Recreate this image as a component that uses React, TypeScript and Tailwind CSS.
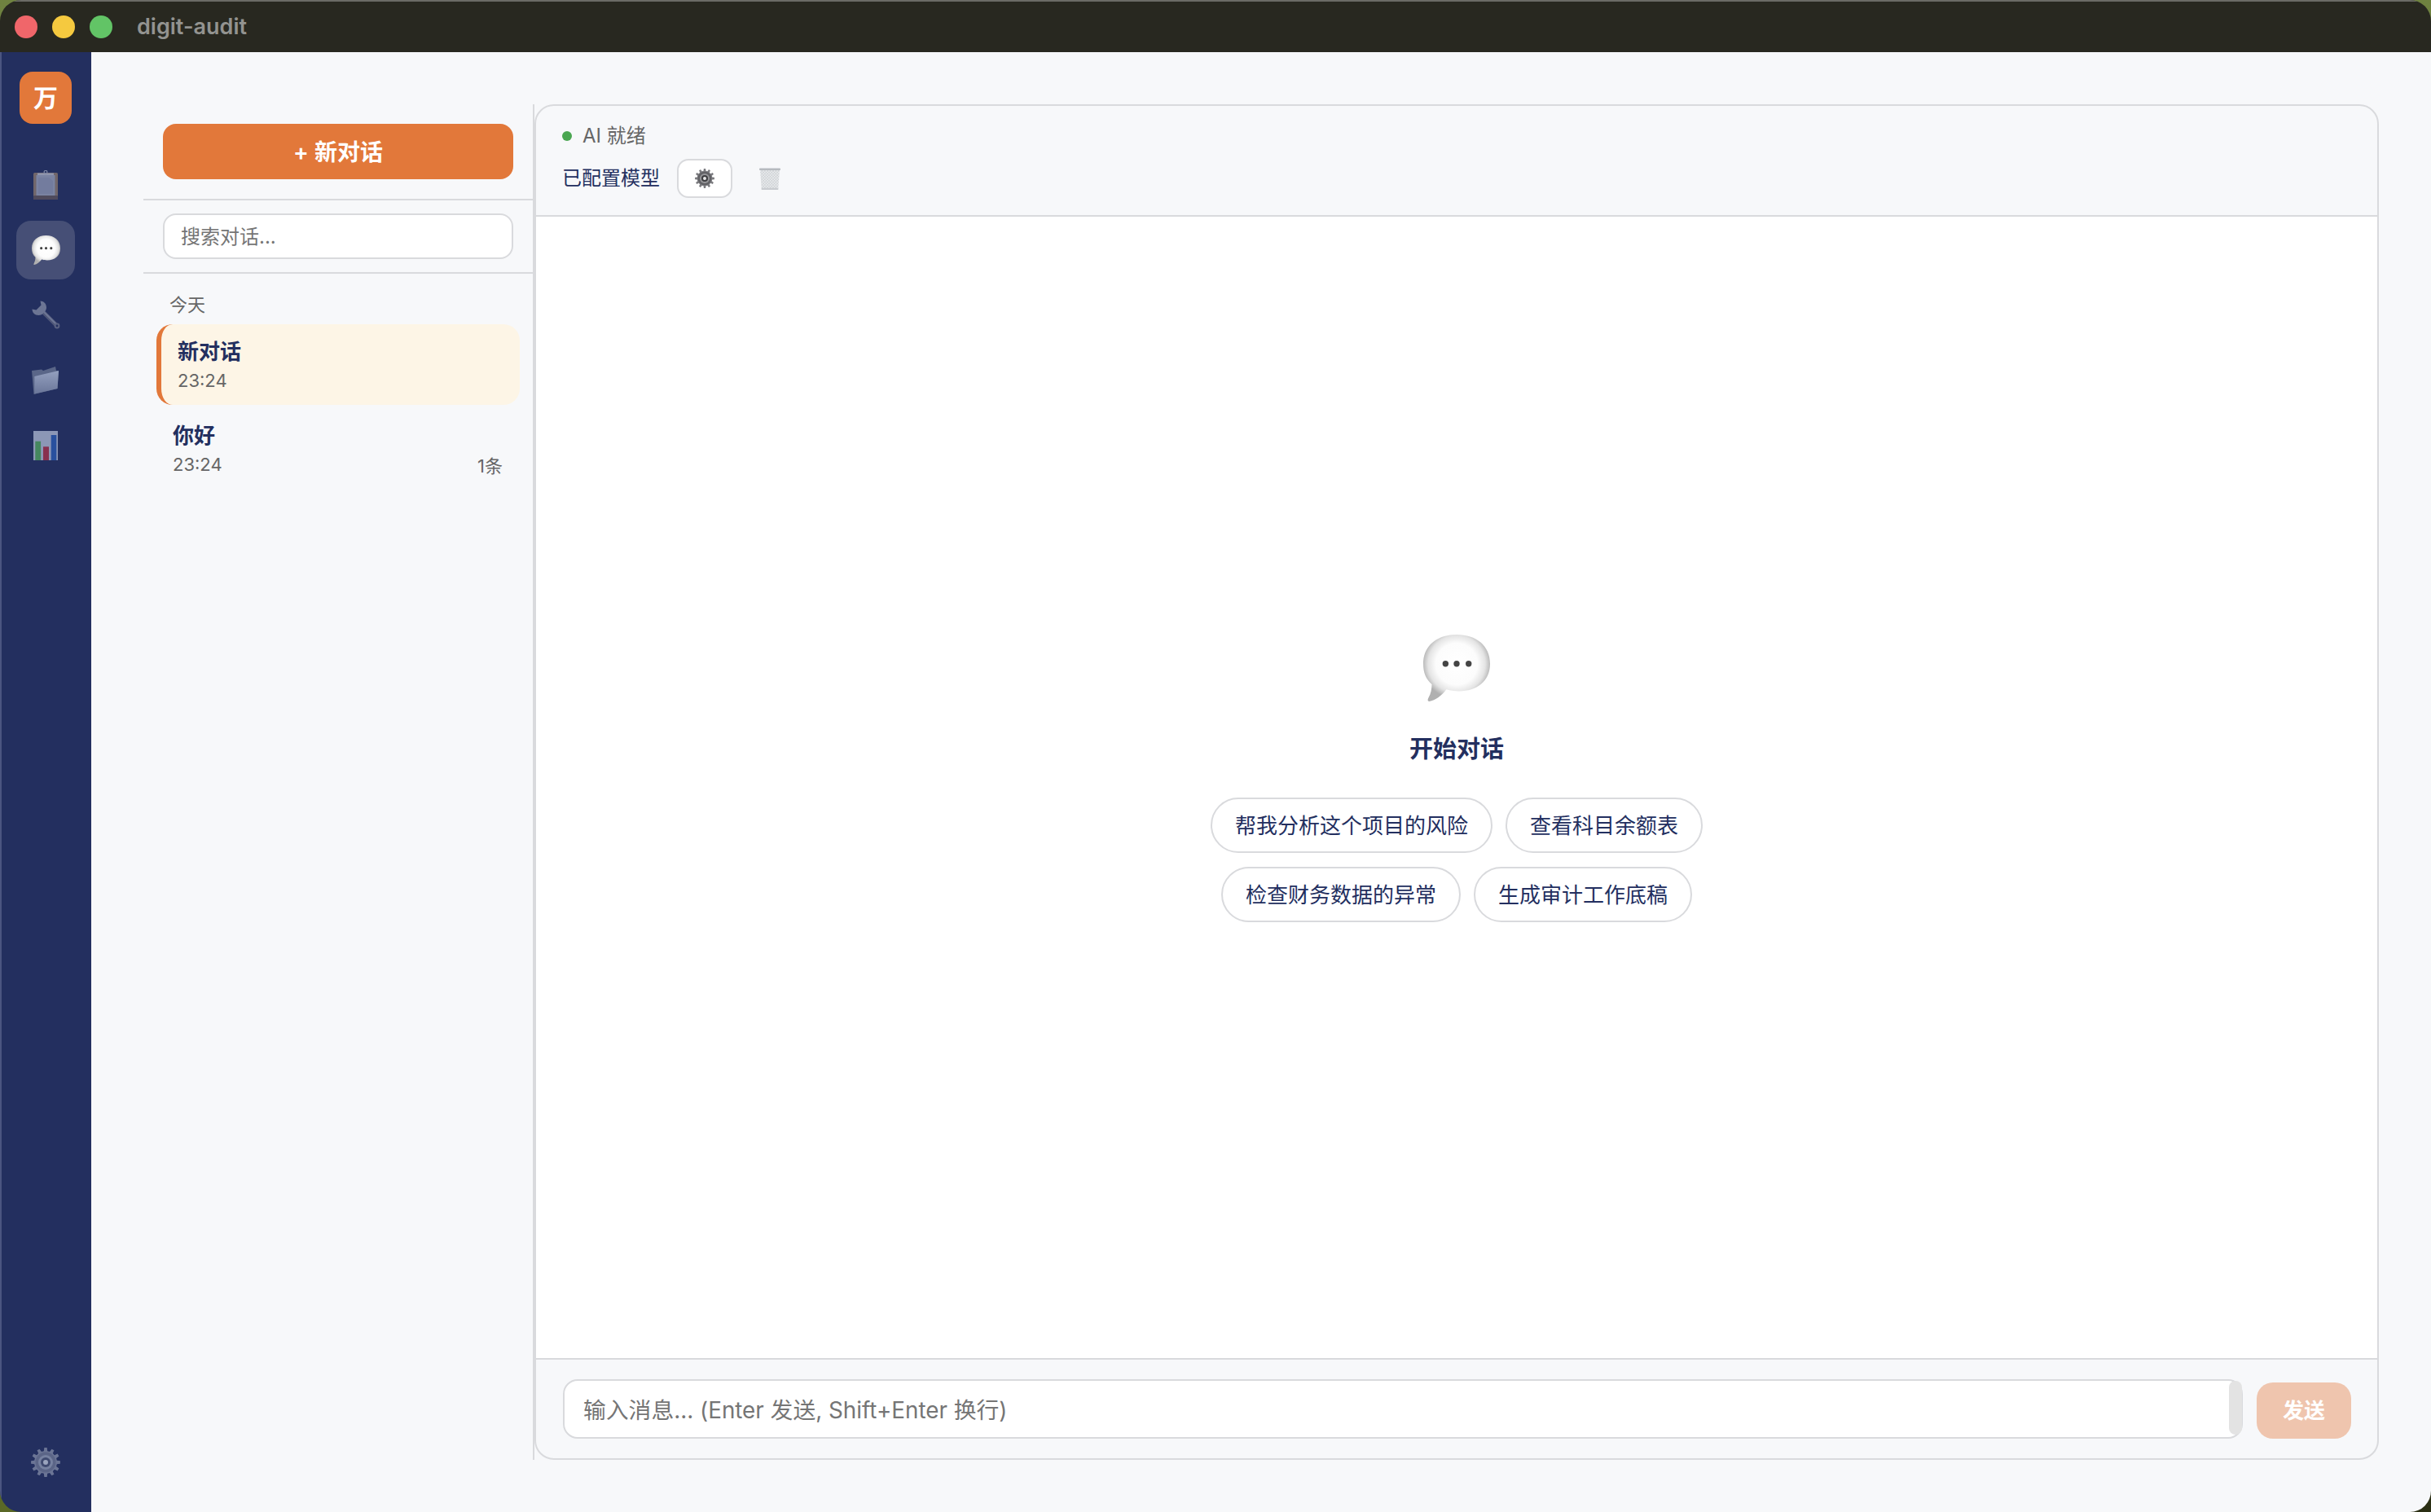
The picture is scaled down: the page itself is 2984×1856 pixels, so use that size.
import React from "react";

function gearPath(cx: number, cy: number, rOuter: number, rInner: number, teeth: number) {
  const pts: string[] = [];
  const step = (Math.PI * 2) / teeth;
  for (let i = 0; i < teeth; i++) {
    const a = i * step - Math.PI / 2;
    const add = (r: number, t: number) =>
      pts.push(`${(cx + r * Math.cos(a + t * step)).toFixed(2)} ${(cy + r * Math.sin(a + t * step)).toFixed(2)}`);
    add(rInner, -0.3);
    add(rOuter, -0.18);
    add(rOuter, 0.18);
    add(rInner, 0.3);
  }
  return "M" + pts.join("L") + "Z";
}

function Bubble({ className, id }: { className: string; id: string }) {
  return (
    <svg className={className} viewBox="0 0 78 78" preserveAspectRatio="none">
      <defs>
        <radialGradient id={id} cx="50%" cy="44%" r="52%">
          <stop offset="0%" stopColor="#ffffff" />
          <stop offset="60%" stopColor="#fcfcfc" />
          <stop offset="82%" stopColor="#e4e4e4" />
          <stop offset="100%" stopColor="#b0b0b0" />
        </radialGradient>
      </defs>
      <path
        d="M39 0C62 0 78 13 78 34C78 55 62 66 42 66C36 66 31 65 27 64C22 71 14 77 7 78C5 78 5 76 6 74C9 69 10 63 10 58C3 52 0 44 0 34C0 13 16 0 39 0Z"
        fill={`url(#${id})`}
      />
      <circle cx="26" cy="34" r="3.5" fill="#444" />
      <circle cx="39" cy="34" r="3.5" fill="#444" />
      <circle cx="53" cy="34" r="3.5" fill="#444" />
    </svg>
  );
}

function Clipboard() {
  return (
    <svg className="h-[36px] w-[30px]" viewBox="0 0 30 36">
      <rect x="0" y="3" width="30" height="33" rx="1.5" fill="#71666a" />
      <rect x="0" y="31" width="30" height="5" rx="1" fill="#4f4a5c" />
      <rect x="3.5" y="6" width="23" height="25" fill="#7a83a2" />
      <path d="M5 3.5h20v2.5H5z" fill="#8f95ad" />
      <circle cx="15" cy="2.2" r="1.9" fill="none" stroke="#8088a5" strokeWidth="1.2" />
      <path d="M6 9h13l5 4v16H6z" fill="#737c9e" />
    </svg>
  );
}

function Wrench() {
  return (
    <svg className="h-[36px] w-[35px]" viewBox="0 0 35 36">
      <path d="M13 13L31 31" stroke="#4f5778" strokeWidth="5.2" strokeLinecap="round" />
      <path d="M12.5 11.5L30 29" stroke="#6d7695" strokeWidth="2.2" strokeLinecap="round" />
      <path
        d="M10.5 0.5C14.5 0.5 18 3.5 18 8.5C18 10.5 17 12 16.5 13L13 16.5C12 17 10.5 18 8.5 18C3.5 18 0.5 14.5 0.5 10.5L5.5 11.5L11.5 5.5Z"
        fill="#6c7594"
      />
      <circle cx="31" cy="31" r="3.4" fill="#5a6282" />
      <circle cx="31" cy="31" r="1.4" fill="#232f5f" />
    </svg>
  );
}

function Folder() {
  return (
    <svg className="h-[34px] w-[34px]" viewBox="0 0 34 34">
      <defs>
        <linearGradient id="fold" x1="0" y1="0" x2="0" y2="1">
          <stop offset="0%" stopColor="#94a0bf" />
          <stop offset="100%" stopColor="#6a7699" />
        </linearGradient>
      </defs>
      <path d="M0 5L12 3.5L14 5L29 0L30 5L33 5.5L31.5 27L2.5 34Z" fill="#5a6688" />
      <path d="M3.3 12L33 5L31.5 27L3.3 33.5Z" fill="url(#fold)" />
    </svg>
  );
}

function Chart() {
  return (
    <svg className="h-[36px] w-[30px]" viewBox="0 0 30 36">
      <rect width="30" height="36" fill="#8c97b6" />
      <rect x="2.3" y="12.7" width="6.8" height="23.3" fill="#45875f" />
      <rect x="12" y="19.3" width="7" height="16.7" fill="#88304f" />
      <rect x="21.7" y="5" width="6.6" height="31" fill="#29509e" />
    </svg>
  );
}

function Gear({ variant, className }: { variant: "nav" | "btn"; className: string }) {
  const nav = variant === "nav";
  return (
    <svg className={className} viewBox="0 0 36 36">
      <path d={gearPath(18, 18, 18, 14, 12)} fill={nav ? "#6b7595" : "#7b7b7f"} />
      <circle cx="18" cy="18" r="12.5" fill={nav ? "#5b6587" : "#616165"} />
      <circle cx="18" cy="18" r="9" fill={nav ? "#7681a0" : "#97979a"} />
      <circle cx="18" cy="18" r="6" fill={nav ? "#3f4a70" : "#3d3d40"} />
      <circle cx="18" cy="18" r="3" fill={nav ? "#9aa4bd" : "#e8e8e8"} />
    </svg>
  );
}

function Trash() {
  return (
    <svg className="h-[27px] w-[26px]" viewBox="0 0 26 27">
      <defs>
        <pattern id="mesh" width="2.4" height="2.4" patternUnits="userSpaceOnUse" patternTransform="rotate(45)">
          <rect width="2.4" height="2.4" fill="#eaecee" />
          <path d="M0 0H2.4M0 0V2.4" stroke="#bfc3c7" strokeWidth="0.9" />
        </pattern>
      </defs>
      <path d="M1 2H25L23.2 26.5H2.8Z" fill="url(#mesh)" />
      <path d="M2.7 24.8H23.3L23.2 27H2.8Z" fill="#c9ccd0" />
      <rect x="0" y="0.4" width="26" height="2.6" rx="1" fill="#b6babf" />
    </svg>
  );
}

function NavTile({ active, children }: { active?: boolean; children: React.ReactNode }) {
  return (
    <div
      className={
        active
          ? "flex h-[72px] w-[72px] items-center justify-center rounded-[18px] bg-[#464f76]"
          : "flex h-[72px] w-[72px] items-center justify-center rounded-[18px]"
      }
    >
      {children}
    </div>
  );
}

function Chip({ text }: { text: string }) {
  return (
    <button className="h-[68px] rounded-full border-2 border-[#d9dadd] bg-white px-[28px] text-[26px] text-[#232f5f]">
      {text}
    </button>
  );
}

export default function App() {
  return (
    <div className="h-[1856px] w-[2984px] overflow-hidden bg-[radial-gradient(circle_at_100%_100%,#2b2f14_0,#2b2f14_70px,transparent_71px),linear-gradient(#6f8240,#5a6826)] font-['Inter','Noto_Sans_CJK_SC',sans-serif]">
      <div className="flex h-full w-full flex-col overflow-hidden rounded-[26px]">
        <header className="flex h-[64px] shrink-0 items-center border-t-2 border-[#6b6b66] bg-[#282820]">
          <div className="ml-[18px] h-[28px] w-[28px] rounded-full bg-[#f0666a]" />
          <div className="ml-[18px] h-[28px] w-[28px] rounded-full bg-[#f5c93f]" />
          <div className="ml-[18px] h-[28px] w-[28px] rounded-full bg-[#62c466]" />
          <div className="ml-[30px] text-[27px] font-semibold text-[#939390]">digit-audit</div>
        </header>

        <div className="flex min-h-0 flex-1">
          <aside className="flex w-[112px] shrink-0 flex-col items-center border-l-2 border-[#4b5580] bg-[#232f5f] pb-[25px] pr-[2px] pt-[24px]">
            <div className="flex h-[64px] w-[64px] items-center justify-center rounded-[16px] bg-[#e2783a] text-[30px] font-bold text-white">
              万
            </div>
            <nav className="mt-[39px] flex flex-col gap-[8px]">
              <NavTile>
                <Clipboard />
              </NavTile>
              <NavTile active>
                <Bubble id="bub-nav" className="h-[36px] w-[35px]" />
              </NavTile>
              <NavTile>
                <Wrench />
              </NavTile>
              <NavTile>
                <Folder />
              </NavTile>
              <NavTile>
                <Chart />
              </NavTile>
            </nav>
            <div className="mt-auto flex h-[72px] w-[72px] items-center justify-center">
              <Gear variant="nav" className="h-[36px] w-[36px]" />
            </div>
          </aside>

          <main className="flex min-w-0 flex-1 bg-[#f7f8fa] py-[64px] pl-[64px] pr-[64px]">
            <section className="flex w-[480px] shrink-0 flex-col border-r-2 border-[#d9dadd]">
              <div className="border-b-2 border-[#d9dadd] px-[24px] py-[24px]">
                <button className="h-[68px] w-full rounded-[16px] bg-[#e2783a] pt-[1px] text-[28px] font-semibold text-white">
                  + 新对话
                </button>
              </div>
              <div className="border-b-2 border-[#d9dadd] px-[24px] py-[16px]">
                <input
                  readOnly
                  placeholder="搜索对话..."
                  className="h-[56px] w-full rounded-[16px] border-2 border-[#d9dadd] bg-white px-[20px] text-[24px] outline-none placeholder:text-[#757575]"
                />
              </div>
              <div className="flex flex-col px-[16px] pt-[20px]">
                <div className="pl-[16px] text-[22px] leading-[36px] text-[#666666]">今天</div>
                <div className="mt-[6px] flex h-[99px] flex-col justify-center rounded-[20px] border-l-[6px] border-[#e2783a] bg-[#fdf5e6] pl-[20px] pt-[3px]">
                  <div className="text-[26px] font-semibold leading-[36px] text-[#232f5f]">新对话</div>
                  <div className="text-[22px] leading-[34px] text-[#666666]">23:24</div>
                </div>
                <div className="mt-[4px] flex h-[99px] flex-col justify-center pl-[20px] pr-[21px] pt-[3px]">
                  <div className="text-[26px] font-semibold leading-[36px] text-[#232f5f]">你好</div>
                  <div className="flex items-end justify-between text-[22px] leading-[34px] text-[#666666]">
                    <span>23:24</span>
                    <span className="translate-y-[2px]">1条</span>
                  </div>
                </div>
              </div>
            </section>

            <section className="flex min-w-0 flex-1 flex-col overflow-hidden rounded-[24px] border-2 border-[#d9dadd]">
              <div className="flex h-[136px] shrink-0 flex-col border-b-2 border-[#d9dadd] pl-[32px] pt-[19px]">
                <div className="flex h-[36px] items-center gap-[13px] text-[24px] text-[#666666]">
                  <span className="h-[12px] w-[12px] rounded-full bg-[#4aa651]" />
                  <span>AI 就绪</span>
                </div>
                <div className="mt-[10px] flex items-center">
                  <span className="text-[24px] text-[#232f5f]">已配置模型</span>
                  <button className="ml-[21px] flex h-[48px] w-[68px] items-center justify-center rounded-[14px] border-2 border-[#d9dadd] bg-white">
                    <Gear variant="btn" className="h-[24px] w-[24px]" />
                  </button>
                  <div className="ml-[33px]">
                    <Trash />
                  </div>
                </div>
              </div>

              <div className="flex min-h-0 flex-1 flex-col items-center justify-center bg-white pb-[22px]">
                <Bubble id="bub-main" className="h-[82px] w-[82px]" />
                <div className="mt-[39px] text-[29px] font-semibold leading-[40px] text-[#232f5f]">开始对话</div>
                <div className="mt-[39px] flex w-[640px] flex-wrap justify-center gap-x-[16px] gap-y-[17px]">
                  <Chip text="帮我分析这个项目的风险" />
                  <Chip text="查看科目余额表" />
                  <Chip text="检查财务数据的异常" />
                  <Chip text="生成审计工作底稿" />
                </div>
              </div>

              <div className="flex shrink-0 items-end gap-[17px] border-t-2 border-[#d9dadd] pb-[24px] pl-[33px] pr-[32px] pt-[24px]">
                <div className="relative min-w-0 flex-1">
                  <input
                    readOnly
                    placeholder="输入消息... (Enter 发送, Shift+Enter 换行)"
                    className="h-[73px] w-full rounded-[18px] border-2 border-[#d9dadd] bg-white pl-[23px] pr-[24px] pt-[3px] text-[27.8px] outline-none placeholder:text-[#757575]"
                  />
                  <div className="absolute bottom-[5px] right-[1px] top-[2px] w-[16px] rounded-[8px] bg-[#e3e3e3]" />
                </div>
                <button className="h-[69px] w-[116px] shrink-0 rounded-[20px] bg-[#efc5ae] text-[26px] font-semibold text-white">
                  发送
                </button>
              </div>
            </section>
          </main>
        </div>
      </div>
    </div>
  );
}
